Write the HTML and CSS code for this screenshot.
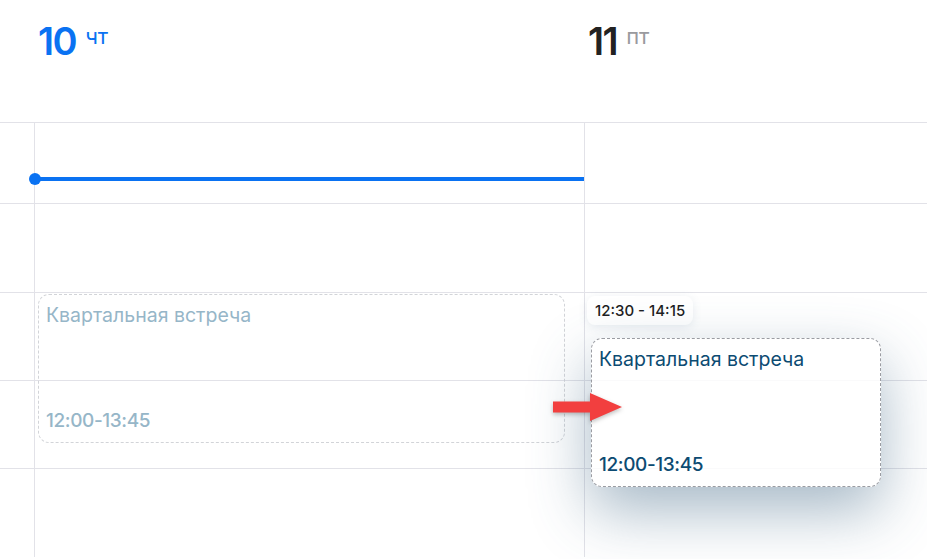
FILE: index.html
```html
<!DOCTYPE html>
<html lang="ru">
<head>
  <meta charset="UTF-8">
  <title>Календарь</title>
  <link rel="stylesheet" href="styles.css">
</head>
<body>
  <div class="calendar">
    <div class="head">
      <div class="gutter"></div>
      <div class="day today"><span class="num">10</span><span class="wd">чт</span></div>
      <div class="day"><span class="num">11</span><span class="wd">пт</span></div>
    </div>

    <div class="grid">
      <div class="cell gutter r1"></div><div class="cell col r1"></div><div class="cell col r1"></div>
      <div class="cell gutter r2"></div><div class="cell col r2"></div><div class="cell col r2"></div>
      <div class="cell gutter r3"></div><div class="cell col r3"></div><div class="cell col r3"></div>
      <div class="cell gutter r3"></div><div class="cell col r3"></div><div class="cell col r3"></div>
      <div class="cell gutter r5"></div><div class="cell col r5"></div><div class="cell col r5"></div>

      <!-- current time -->
      <div class="now"><span class="now-dot"></span></div>

      <!-- original slot of the event being dragged -->
      <div class="event ghost">
        <div class="title">Квартальная встреча</div>
        <div class="time">12:00-13:45</div>
      </div>

      <div class="drop-time">12:30 - 14:15</div>

      <div class="event dragging">
        <div class="title">Квартальная встреча</div>
        <div class="time">12:00-13:45</div>
      </div>

      <svg class="arrow" width="76" height="34" viewBox="0 0 76 34">
        <path d="M3 11.5 H40 V3 L72 17 L40 31 V22.5 H3 Z" fill="#f23f3f"/>
      </svg>
    </div>
  </div>
</body>
</html>
```

FILE: styles.css
```css
:root {
  --line: #e2e2e8;
  --blue: #0a72f2;
}

body {
  margin: 0;
  background: #fff;
  font-family: "Inter", "Noto Sans", sans-serif;
  overflow: hidden;
}

.calendar {
  width: 927px;
  height: 559px;
  overflow: hidden;
}

.head {
  display: grid;
  grid-template-columns: 34px 550px 1fr;
  height: 122px;
}

.day {
  display: flex;
  align-items: flex-start;
  gap: 9px;
  padding: 19px 0 0 4px;
  color: #222;
}

.day .num {
  font-size: 38px;
  font-weight: 600;
  letter-spacing: -1.5px;
  line-height: 44px;
}

.day .wd {
  font-size: 22px;
  line-height: 22px;
  margin-top: 6px;
  color: #9a9a9e;
}

.day.today .num,
.day.today .wd {
  color: var(--blue);
}

.grid {
  position: relative;
  display: grid;
  grid-template-columns: 34px 550px 1fr;
}

.cell {
  border-top: 1px solid var(--line);
  box-sizing: border-box;
}

.cell.col {
  border-left: 1px solid var(--line);
}

.r1 { height: 81px; }
.r2 { height: 89px; }
.r3 { height: 88px; }
.r5 { height: 89px; }

.now {
  position: absolute;
  left: 35px;
  top: 55px;
  width: 549px;
  height: 4px;
  background: var(--blue);
}

.now-dot {
  position: absolute;
  left: -6px;
  top: -4px;
  width: 12px;
  height: 12px;
  border-radius: 50%;
  background: var(--blue);
}

.event {
  position: absolute;
  box-sizing: border-box;
  display: flex;
  flex-direction: column;
  justify-content: space-between;
  padding: 9px 7px 10px;
  border-radius: 11px;
  font-size: 19.5px;
  font-weight: 400;
  line-height: 22px;
}

.event .time {
  font-size: 19px;
  font-weight: 500;
  letter-spacing: -0.4px;
}

.ghost {
  left: 38px;
  top: 172px;
  width: 527px;
  height: 149px;
  border: 1px dashed #d2d4d8;
  color: #96b6c8;
}

.dragging {
  left: 591px;
  top: 216px;
  width: 290px;
  height: 149px;
  border: 1px dashed #9a9ca2;
  background: rgba(255, 255, 255, 0.82);
  color: #0c4b72;
  box-shadow: 0 24px 60px rgba(60, 100, 130, 0.45);
}

.drop-time {
  position: absolute;
  left: 587px;
  top: 174px;
  padding: 5px 8px;
  border-radius: 8px;
  background: #fff;
  font-size: 15px;
  font-weight: 500;
  line-height: 19px;
  color: #1e1e22;
  box-shadow: 0 2px 10px rgba(70, 110, 140, 0.12);
}

.arrow {
  position: absolute;
  left: 550px;
  top: 268px;
  filter: drop-shadow(0 2px 2px rgba(0, 0, 0, 0.25));
}
```
